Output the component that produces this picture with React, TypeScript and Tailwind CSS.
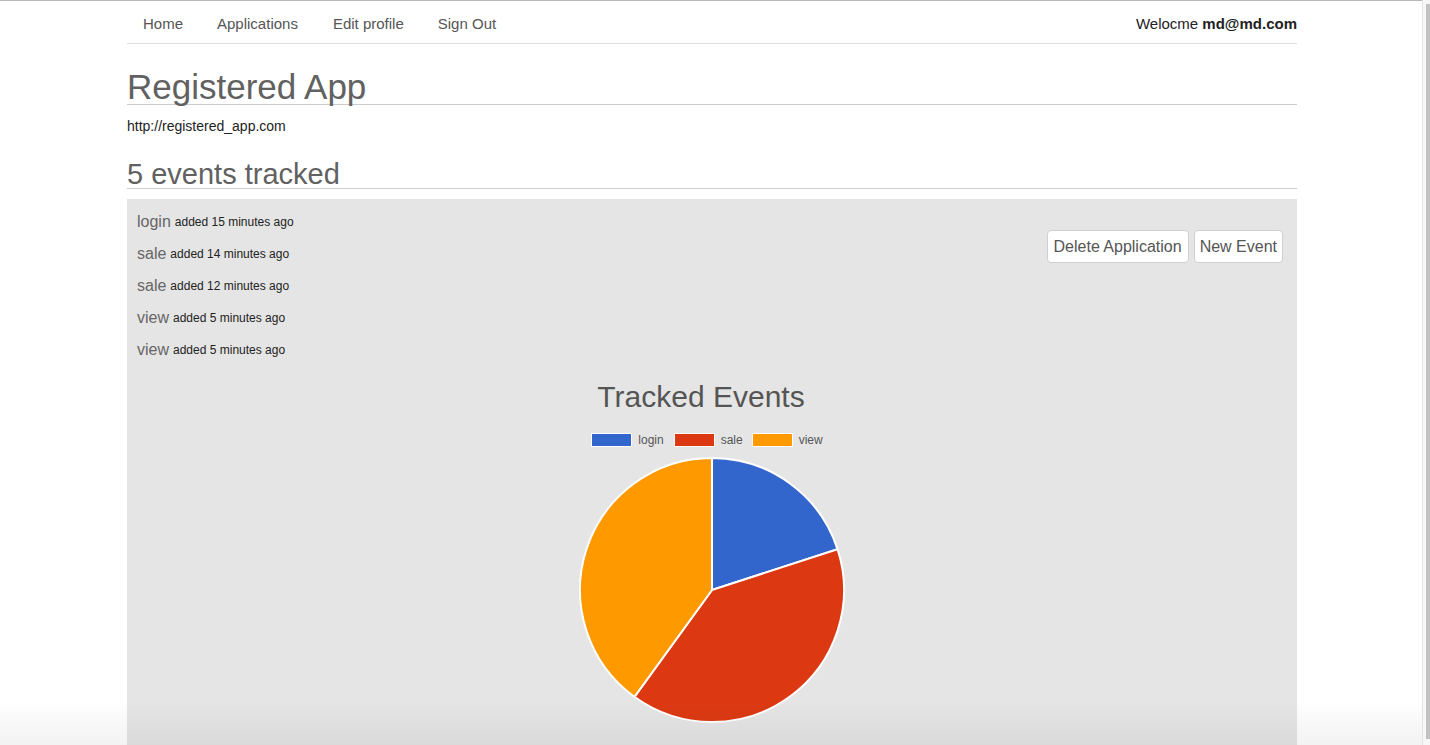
import React from 'react';

const events = [
    { name: 'login', when: '15 minutes ago' },
    { name: 'sale', when: '14 minutes ago' },
    { name: 'sale', when: '12 minutes ago' },
    { name: 'view', when: '5 minutes ago' },
    { name: 'view', when: '5 minutes ago' },
];

const slices = [
    { label: 'login', value: 1, color: '#3366cc' },
    { label: 'sale', value: 2, color: '#dc3912' },
    { label: 'view', value: 2, color: '#ff9900' },
];

function PieChart() {
    const total = slices.reduce((s, x) => s + x.value, 0);
    const cx = 134;
    const cy = 134;
    const r = 132;
    let angle = 0;

    const point = (a: number) => {
        const rad = (a * Math.PI) / 180;
        return [cx + r * Math.sin(rad), cy - r * Math.cos(rad)];
    };

    return (
        <svg width="268" height="268" viewBox="0 0 268 268">
            {slices.map((s) => {
                const start = angle;
                const sweep = (s.value / total) * 360;
                angle += sweep;
                const [x1, y1] = point(start);
                const [x2, y2] = point(start + sweep);
                const large = sweep > 180 ? 1 : 0;
                return (
                    <path
                        key={s.label}
                        d={`M${cx},${cy} L${x1},${y1} A${r},${r} 0 ${large} 1 ${x2},${y2} Z`}
                        fill={s.color}
                        stroke="#ffffff"
                        strokeWidth="2"
                        strokeLinejoin="round"
                    />
                );
            })}
        </svg>
    );
}

export default function App() {
    return (
        <div className="relative flex h-[745px] overflow-hidden bg-white font-['Liberation_Sans',Arial,sans-serif] text-[#333]">
            <div className="flex-1 border-t border-[#b8b8b8]">
                <div className="ml-[127px] w-[1170px]">
                    <div className="flex h-[43px] items-center justify-between border-b border-[#dddddd] pt-[4px]">
                        <ul className="flex items-center text-[15px] text-[#555]">
                            <li className="ml-[16px]">Home</li>
                            <li className="ml-[34px]">Applications</li>
                            <li className="ml-[35px]">Edit profile</li>
                            <li className="ml-[34px]">Sign Out</li>
                        </ul>
                        <div className="text-[15px] text-[#222]">
                            Welocme <span className="font-bold">md@md.com</span>
                        </div>
                    </div>

                    <h1 className="mt-[26px] border-b border-[#cccccc] text-[35px] leading-[34px] text-[#616161]">
                        Registered App
                    </h1>
                    <p className="mt-[12px] text-[14px] leading-[18px] text-[#222]">
                        http://registered_app.com
                    </p>
                    <h2 className="mt-[25px] border-b border-[#cccccc] text-[29px] leading-[28px] text-[#616161]">
                        5 events tracked
                    </h2>

                    <div className="mt-[10px] h-[600px] bg-[#e5e5e5] px-[10px] pt-[7px]">
                        <div className="flex justify-between">
                            <ul>
                                {events.map((e, i) => (
                                    <li key={i} className="flex h-8 items-center">
                                        <span className="text-[16px] text-[#666]">{e.name}</span>
                                        <span className="ml-[4px] text-[12px] text-[#222]">added {e.when}</span>
                                    </li>
                                ))}
                            </ul>
                            <div className="mr-[4px] mt-[24px] flex gap-[5px] self-start">
                                <button className="h-[33px] rounded-[4px] border border-[#cfcfcf] bg-white px-[6px] text-[16px] text-[#555]">
                                    Delete Application
                                </button>
                                <button className="h-[33px] rounded-[4px] border border-[#cfcfcf] bg-white px-[5px] text-[16px] text-[#555]">
                                    New Event
                                </button>
                            </div>
                        </div>

                        <div className="flex flex-col items-center">
                            <h3 className="mr-[22px] mt-[13px] text-[30px] leading-[36px] text-[#555]">Tracked Events</h3>
                            <div className="mr-[10px] mt-[16px] flex items-center text-[12px] text-[#555]">
                                <span className="h-[14px] w-[41px] border border-white bg-[#3366cc]" />
                                <span className="ml-[6px]">login</span>
                                <span className="ml-[10px] h-[14px] w-[41px] border border-white bg-[#dc3912]" />
                                <span className="ml-[6px]">sale</span>
                                <span className="ml-[9px] h-[14px] w-[41px] border border-white bg-[#ff9900]" />
                                <span className="ml-[6px]">view</span>
                            </div>
                            <div className="mt-[7px]">
                                <PieChart />
                            </div>
                        </div>
                    </div>
                </div>
            </div>

            <div className="w-[8px] border-l border-[#e3e3e3] bg-[#f7f7f7] pl-[3px] pt-[4px]">
                <div className="h-[735px] bg-[#c2c2c2]" />
            </div>

            <div className="pointer-events-none absolute bottom-0 left-0 right-[8px] h-[45px] bg-gradient-to-b from-transparent to-black/[0.05]" />
        </div>
    );
}
